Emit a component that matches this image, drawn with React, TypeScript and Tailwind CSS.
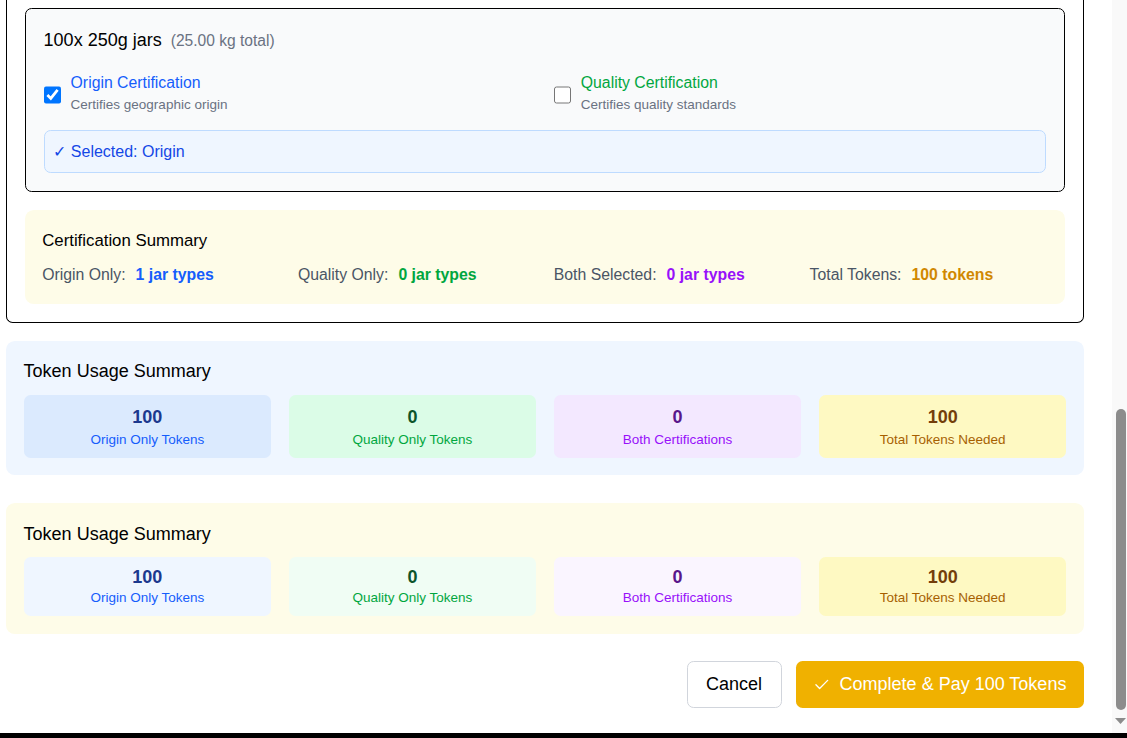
import React from "react";
import { Check } from "lucide-react";

type Box = { value: string; label: string; bg: string; num: string; lab: string };

const boxes1: Box[] = [
  { value: "100", label: "Origin Only Tokens", bg: "bg-blue-100", num: "text-blue-900", lab: "text-blue-600" },
  { value: "0", label: "Quality Only Tokens", bg: "bg-green-100", num: "text-green-900", lab: "text-green-600" },
  { value: "0", label: "Both Certifications", bg: "bg-purple-100", num: "text-purple-900", lab: "text-purple-600" },
  { value: "100", label: "Total Tokens Needed", bg: "bg-yellow-100", num: "text-yellow-900", lab: "text-yellow-700" },
];

const boxes2: Box[] = [
  { value: "100", label: "Origin Only Tokens", bg: "bg-blue-50", num: "text-blue-900", lab: "text-blue-600" },
  { value: "0", label: "Quality Only Tokens", bg: "bg-green-50", num: "text-green-900", lab: "text-green-600" },
  { value: "0", label: "Both Certifications", bg: "bg-purple-50", num: "text-purple-900", lab: "text-purple-600" },
  { value: "100", label: "Total Tokens Needed", bg: "bg-yellow-100", num: "text-yellow-900", lab: "text-yellow-700" },
];

function SummaryItem({ label, value, color }: { label: string; value: string; color: string }) {
  return (
    <div className="text-[15.8px] leading-[23.1px] whitespace-nowrap">
      <span className="text-gray-600">{label}</span>
      <span className={`ml-[10px] font-bold ${color}`}>{value}</span>
    </div>
  );
}

function CertOption({
  checked,
  title,
  desc,
  color,
}: {
  checked: boolean;
  title: string;
  desc: string;
  color: string;
}) {
  return (
    <div className="flex items-start gap-[9.4px]">
      <input
        type="checkbox"
        checked={checked}
        readOnly
        className="m-0 mt-[15.5px] w-[17.6px] h-[17.6px] shrink-0"
      />
      <div className="flex flex-col">
        <span className={`text-[15.8px] leading-[23.1px] ${color}`}>{title}</span>
        <span className="mt-[1.5px] text-[13.5px] leading-[19.8px] text-gray-500">{desc}</span>
      </div>
    </div>
  );
}

export default function App() {
  return (
    <div className="w-[1127px] h-[738px] bg-black flex flex-col overflow-hidden font-['Liberation_Sans',Arial,sans-serif] text-black">
      <div className="h-[733px] flex bg-white shrink-0">
        <div className="w-[1112px] overflow-hidden pl-[6px] pr-[28px]">
          {/* Outer certification panel (top cut off by scroll) */}
          <div className="border-x border-b border-black rounded-b-[6.6px] px-[17.6px] pt-[8px] pb-[18px] flex flex-col gap-[17.6px]">
            <div className="border border-black rounded-[6.6px] bg-gray-50 px-[18px] pt-[17.6px] pb-[17.6px]">
              <div className="leading-[26.4px]">
                <span className="text-[18px]">100x 250g jars</span>
                <span className="ml-[9px] text-[15.6px] text-gray-500">(25.00 kg total)</span>
              </div>
              <div className="mt-[16.5px] grid grid-cols-2 gap-[17.6px]">
                <CertOption
                  checked
                  title="Origin Certification"
                  desc="Certifies geographic origin"
                  color="text-blue-600"
                />
                <CertOption
                  checked={false}
                  title="Quality Certification"
                  desc="Certifies quality standards"
                  color="text-green-600"
                />
              </div>
              <div className="mt-[15.5px] border border-blue-200 bg-blue-50 rounded-[6.6px] px-[8.8px] pt-[8.5px] pb-[9.5px] text-[16px] leading-[23.1px] text-blue-700">
                ✓ Selected: Origin
              </div>
            </div>

            <div className="bg-yellow-50 rounded-[8.8px] px-[17.6px] pt-[18.5px] pb-[17.5px]">
              <div className="text-[16.8px] leading-[26.4px]">Certification Summary</div>
              <div className="mt-[8.8px] grid grid-cols-4 gap-[17.6px]">
                <SummaryItem label="Origin Only:" value="1 jar types" color="text-blue-600" />
                <SummaryItem label="Quality Only:" value="0 jar types" color="text-green-600" />
                <SummaryItem label="Both Selected:" value="0 jar types" color="text-purple-600" />
                <SummaryItem label="Total Tokens:" value="100 tokens" color="text-yellow-600" />
              </div>
            </div>
          </div>

          {/* Token Usage Summary 1 */}
          <div className="mt-[17.6px] bg-blue-50 rounded-[8.8px] px-[17.6px] pt-[17.6px] pb-[17.6px]">
            <div className="text-[18px] leading-[26.4px]">Token Usage Summary</div>
            <div className="mt-[10.5px] grid grid-cols-4 gap-[17.6px]">
              {boxes1.map((b, i) => (
                <div key={i} className={`${b.bg} rounded-[6.6px] px-[8.8px] pt-[9px] pb-[8.1px] flex flex-col items-center`}>
                  <span className={`text-[18px] leading-[26.4px] font-bold ${b.num}`}>{b.value}</span>
                  <span className={`text-[13.5px] leading-[19px] ${b.lab}`}>{b.label}</span>
                </div>
              ))}
            </div>
          </div>

          {/* Token Usage Summary 2 */}
          <div className="mt-[28px] bg-yellow-50 rounded-[8.8px] p-[17.6px]">
            <div className="text-[18px] leading-[26.4px]">Token Usage Summary</div>
            <div className="mt-[10.3px] grid grid-cols-4 gap-[17.6px]">
              {boxes2.map((b, i) => (
                <div key={i} className={`${b.bg} rounded-[6.6px] px-[8.8px] pt-[8.8px] pb-[8.2px] flex flex-col items-center`}>
                  <span className={`text-[18px] leading-[22px] font-bold ${b.num}`}>{b.value}</span>
                  <span className={`text-[13.5px] leading-[19.8px] ${b.lab}`}>{b.label}</span>
                </div>
              ))}
            </div>
          </div>

          {/* Footer buttons */}
          <div className="mt-[27.4px] flex justify-end gap-[14px]">
            <button className="h-[46.6px] px-[18.5px] border border-gray-300 rounded-[6.6px] bg-white text-[18px] text-black">
              Cancel
            </button>
            <button className="h-[46.6px] px-[17.6px] rounded-[6.6px] bg-yellow-500 text-white text-[18px] flex items-center gap-[8.8px]">
              <Check size={17.6} strokeWidth={1.8} />
              <span>Complete &amp; Pay 100 Tokens</span>
            </button>
          </div>
        </div>

        {/* Scrollbar */}
        <div className="w-[15px] bg-[#f9f9f9] flex flex-col items-center pt-[409px]">
          <div className="w-[10px] h-[301px] rounded-full bg-[#8c8c8c] ml-[2px]" />
          <svg width="11" height="8" viewBox="0 0 11 8" className="mt-[7px] ml-[2px]">
            <polygon points="0,1 11,1 5.5,7" fill="#8c8c8c" />
          </svg>
        </div>
      </div>
    </div>
  );
}
